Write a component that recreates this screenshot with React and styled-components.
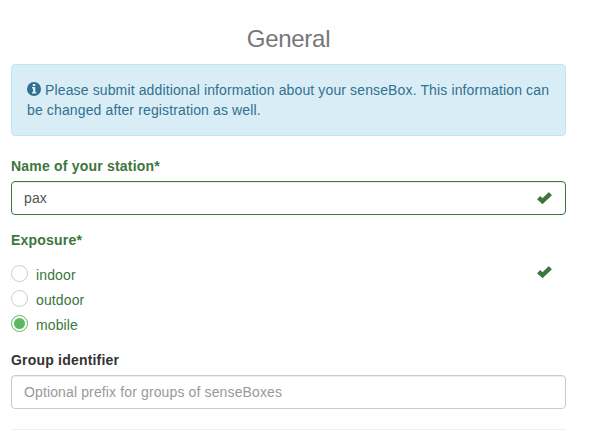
import React from "react";
import styled, { createGlobalStyle, css } from "styled-components";

const GlobalStyle = createGlobalStyle`
  *, *::before, *::after { box-sizing: border-box; }
  body {
    margin: 0;
    background: #fff;
    color: #333;
    font: 14px/20px "Liberation Sans", Arial, sans-serif;
    letter-spacing: 0.13px;
    overflow: hidden;
  }
`;

const Page = styled.main`
  width: 555px;
  height: 448px;
  margin-left: 11px;
  padding-top: 26px;
  overflow: hidden;
`;

const Title = styled.h3`
  margin: 0 0 12px;
  font-size: 24px;
  line-height: 26px;
  font-weight: 400;
  letter-spacing: -0.28px;
  color: #777;
  text-align: center;
`;

const Notice = styled.div`
  height: 72px;
  padding: 15px;
  border: 1px solid #bce8f1;
  border-radius: 4px;
  background: #d9edf7;
  color: #31708f;
`;

const InfoIcon = styled.svg`
  width: 14px;
  height: 14px;
  vertical-align: -1px;
`;

const Field = styled.div`
  margin-top: ${(p) => p.$gap}px;
`;

const Label = styled.label`
  display: block;
  margin-bottom: 5px;
  font-weight: 700;
  letter-spacing: 0.2px;
  color: ${(p) => (p.$valid ? "#3c763d" : "#333")};
`;

const InputFrame = styled.div`
  display: flex;
  align-items: center;
  height: 34px;
  padding: 0 13px 0 0;
  border: 1px solid ${(p) => (p.$valid ? "#3c763d" : "#ccc")};
  border-radius: 4px;
  box-shadow: inset 0 1px 1px rgba(0, 0, 0, 0.075);
`;

const Input = styled.input`
  flex: 1;
  height: 32px;
  padding: 0 12px;
  border: 0;
  outline: 0;
  background: transparent;
  color: #555;
  font: inherit;
  letter-spacing: inherit;
  &::placeholder { color: #999; opacity: 1; }
`;

const CheckIcon = styled.svg`
  width: 16px;
  height: 14px;
  flex: none;
  fill: #3c763d;
`;

const Choices = styled.div`
  display: flex;
  justify-content: space-between;
  padding: 10px 14px 0 0;
`;

const RadioList = styled.div`
  display: grid;
  grid-auto-rows: 25px;
`;

const RadioRow = styled.label`
  display: flex;
  align-items: flex-start;
  gap: 8px;
  color: #3c763d;
`;

const RadioDot = styled.span`
  display: grid;
  place-items: center;
  width: 17px;
  height: 17px;
  border: 1px solid ${(p) => (p.$checked ? "#5cb85c" : "#ccc")};
  border-radius: 50%;
  ${(p) => p.$checked && css`
    &::after {
      content: "";
      width: 11px;
      height: 11px;
      border-radius: 50%;
      background: #5cb85c;
    }
  `}
`;

const Divider = styled.hr`
  margin: 20px 0 0;
  border: 0;
  border-top: 1px solid #eee;
`;

const Check = () => (
  <CheckIcon viewBox="0 0 16 14">
    <path d="M1.3 7.9 3.9 5.3Q4.2 5 4.5 5.3L6.5 7.2 12.4 1.5Q12.8 1.1 13.2 1.5L15.7 3.9Q16 4.2 15.7 4.5L7 12.8Q6.5 13.2 6 12.8L1.3 8.5Q1 8.2 1.3 7.9Z" />
  </CheckIcon>
);

const options = ["indoor", "outdoor", "mobile"];

export default function App() {
  return (
    <>
      <GlobalStyle />
      <Page>
        <Title>General</Title>
        <Notice>
          <InfoIcon viewBox="0 0 14 14">
            <circle cx="7" cy="7" r="7" fill="#31708f" />
            <path d="M5.8 2h2.5v2H5.8ZM5 5h3.3v5h1v1.5H5V10h1V6.5H5Z" fill="#d9edf7" />
          </InfoIcon>{" "}
          Please submit additional information about your senseBox. This information can be changed after registration as well.
        </Notice>
        <Field $gap={20}>
          <Label $valid>Name of your station*</Label>
          <InputFrame $valid>
            <Input defaultValue="pax" />
            <Check />
          </InputFrame>
        </Field>
        <Field $gap={15}>
          <Label $valid>Exposure*</Label>
          <Choices>
            <RadioList>
              {options.map((name) => (
                <RadioRow key={name}>
                  <RadioDot $checked={name === "mobile"} />
                  <span>{name}</span>
                </RadioRow>
              ))}
            </RadioList>
            <Check />
          </Choices>
        </Field>
        <Field $gap={10}>
          <Label>Group identifier</Label>
          <InputFrame>
            <Input placeholder="Optional prefix for groups of senseBoxes" />
          </InputFrame>
        </Field>
        <Divider />
      </Page>
    </>
  );
}
